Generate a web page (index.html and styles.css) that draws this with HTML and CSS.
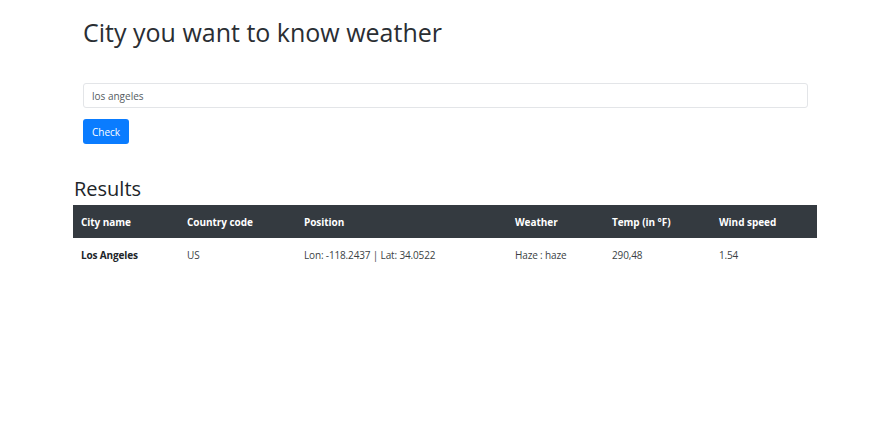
FILE: index.html
```html
<!DOCTYPE html>
<html>
<head>
<meta charset="utf-8">
<link rel="stylesheet" href="styles.css">
</head>
<body>
<div class="search">
  <h1 class="title">City you want to know weather</h1>
  <form class="form">
    <input class="field" type="text" value="los angeles">
    <button class="btn" type="button">Check</button>
  </form>
</div>
<div class="results">
  <h2 class="subtitle">Results</h2>
  <table class="table">
    <colgroup>
      <col class="c1"><col class="c2"><col class="c3"><col class="c4"><col class="c5"><col class="c6">
    </colgroup>
    <thead>
      <tr><th>City name</th><th>Country code</th><th>Position</th><th>Weather</th><th>Temp (in °F)</th><th>Wind speed</th></tr>
    </thead>
    <tbody>
      <tr><td class="city">Los Angeles</td><td>US</td><td>Lon: -118.2437 | Lat: 34.0522</td><td>Haze : haze</td><td>290,48</td><td>1.54</td></tr>
    </tbody>
  </table>
</div>
</body>
</html>
```

FILE: styles.css
```css
html, body {
  margin: 0;
  padding: 0;
  background: #fff;
}
body {
  font-family: "Open Sans", "Noto Sans", sans-serif;
  font-size: 10px;
  color: #212529;
  width: 891px;
  height: 426px;
  overflow: hidden;
}
.search {
  padding: 16px 84px 0 83px;
}
.title {
  margin: 0;
  font-size: 25px;
  font-weight: 400;
  line-height: 32px;
  color: #2a2e33;
}
.form {
  margin-top: 35px;
  display: flex;
  flex-direction: column;
  align-items: flex-start;
  gap: 11px;
}
.field {
  box-sizing: border-box;
  width: 725px;
  height: 25px;
  border: 1px solid #e3e5e8;
  border-radius: 3px;
  padding: 0 8px;
  font-family: inherit;
  font-size: 10px;
  color: #555b61;
  outline: none;
}
.btn {
  height: 25px;
  padding: 0 9px;
  border: none;
  border-radius: 3px;
  background: #0a7cff;
  color: #fff;
  font-family: inherit;
  font-size: 10px;
}
.results {
  padding: 33px 74px 0 73px;
}
.subtitle {
  margin: 0 0 4px 1px;
  font-size: 20px;
  font-weight: 400;
  line-height: 24px;
  color: #212529;
}
.table {
  width: 744px;
  border-collapse: collapse;
  table-layout: fixed;
}
.c1 { width: 106px; }
.c2 { width: 117px; }
.c3 { width: 211px; }
.c4 { width: 97px; }
.c5 { width: 107px; }
.c6 { width: 106px; }
.table th {
  background: #343a40;
  color: #fff;
  font-weight: 700;
  font-size: 10px;
  text-align: left;
  height: 33px;
  padding: 0 8px;
  letter-spacing: -0.05px;
}
.table td {
  height: 34px;
  padding: 0 8px 1px;
  font-size: 10px;
  color: #3b3f44;
  letter-spacing: -0.15px;
}
.table td.city {
  font-weight: 700;
  color: #212529;
}
```
